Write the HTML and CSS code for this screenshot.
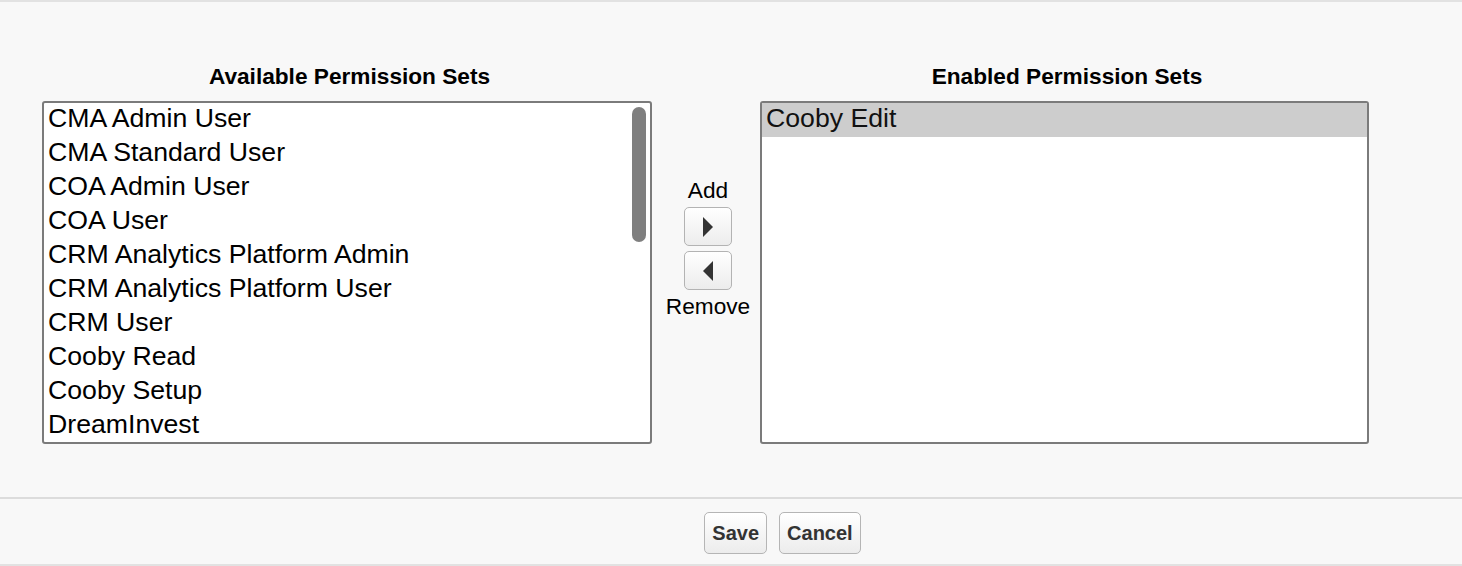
FILE: index.html
```html
<!DOCTYPE html>
<html lang="en">
<head>
<meta charset="utf-8">
<title>Permission Set Assignments</title>
<link rel="stylesheet" href="styles.css">
</head>
<body>
<div class="page">
  <div class="main">
    <div class="col">
      <div class="col-title">Available Permission Sets</div>
      <div class="listbox">
        <div class="opt">CMA Admin User</div>
        <div class="opt">CMA Standard User</div>
        <div class="opt">COA Admin User</div>
        <div class="opt">COA User</div>
        <div class="opt">CRM Analytics Platform Admin</div>
        <div class="opt">CRM Analytics Platform User</div>
        <div class="opt">CRM User</div>
        <div class="opt">Cooby Read</div>
        <div class="opt">Cooby Setup</div>
        <div class="opt">DreamInvest</div>
        <div class="thumb"></div>
      </div>
    </div>
    <div class="mid">
      <div class="mid-label">Add</div>
      <button class="arrow-btn" type="button" aria-label="Add">
        <svg width="10" height="20" viewBox="0 0 10 20"><polygon points="0,0 10,10 0,20" fill="#333"/></svg>
      </button>
      <button class="arrow-btn" type="button" aria-label="Remove">
        <svg width="10" height="20" viewBox="0 0 10 20"><polygon points="10,0 0,10 10,20" fill="#333"/></svg>
      </button>
      <div class="mid-label remove">Remove</div>
    </div>
    <div class="col">
      <div class="col-title">Enabled Permission Sets</div>
      <div class="listbox">
        <div class="opt selected">Cooby Edit</div>
      </div>
    </div>
  </div>
  <div class="footer">
    <button class="btn" type="button">Save</button>
    <button class="btn" type="button">Cancel</button>
  </div>
</div>
</body>
</html>
```

FILE: styles.css
```css
html, body {
  margin: 0;
  padding: 0;
}

body {
  background: #f8f8f8;
  font-family: "Liberation Sans", Arial, sans-serif;
  color: #000;
  width: 1462px;
  height: 566px;
  overflow: hidden;
}

.page {
  border-top: 2px solid #e2e2e2;
}

.main {
  height: 495px;
  box-sizing: border-box;
  padding: 61px 0 0 42px;
  display: flex;
  align-items: flex-start;
}

.col {
  display: flex;
  flex-direction: column;
}

.col:first-child {
  width: 610px;
}

.col:last-child {
  width: 609px;
}

.col-title {
  font-weight: bold;
  font-size: 22.67px;
  line-height: 26px;
  text-align: center;
  padding-left: 5px;
  margin-bottom: 12px;
}

.listbox {
  position: relative;
  height: 343px;
  box-sizing: border-box;
  border: 2px solid #7b7b7b;
  border-radius: 3px;
  background: #fff;
  overflow: hidden;
}

.opt {
  height: 34px;
  box-sizing: border-box;
  line-height: 31px;
  padding: 0 0 3px 4px;
  font-size: 26.67px;
  white-space: nowrap;
  color: #000;
}

.opt.selected {
  background: #cdcdcd;
  color: #111;
}

.thumb {
  position: absolute;
  top: 4px;
  right: 4px;
  width: 14px;
  height: 135px;
  border-radius: 7px;
  background: #7f7f7f;
}

.mid {
  width: 108px;
  box-sizing: border-box;
  padding: 115px 0 0 4px;
  display: flex;
  flex-direction: column;
  align-items: center;
}

.mid-label {
  font-size: 22.67px;
  line-height: 24px;
  margin-bottom: 5px;
}

.mid-label.remove {
  margin: 4px 0 0;
}

.arrow-btn {
  width: 48px;
  height: 39px;
  margin: 0 0 5px;
  padding: 0;
  border: 1px solid #b3b3b3;
  border-radius: 5px;
  background: linear-gradient(#ffffff, #ececec);
  display: flex;
  align-items: center;
  justify-content: center;
}

.arrow-btn + .arrow-btn {
  margin-bottom: 0;
}

.footer {
  border-top: 2px solid #dcdcdc;
  border-bottom: 2px solid #e2e2e2;
  height: 65px;
  box-sizing: content-box;
  padding-left: 103px;
  display: flex;
  justify-content: center;
  align-items: flex-start;
  gap: 12px;
}

.btn {
  margin-top: 13px;
  height: 42px;
  padding: 0 7px;
  border: 1px solid #b5b5b5;
  border-radius: 5px;
  background: linear-gradient(#ffffff, #ececec);
  font-family: "Liberation Sans", Arial, sans-serif;
  font-weight: bold;
  font-size: 20px;
  color: #333;
}
```
